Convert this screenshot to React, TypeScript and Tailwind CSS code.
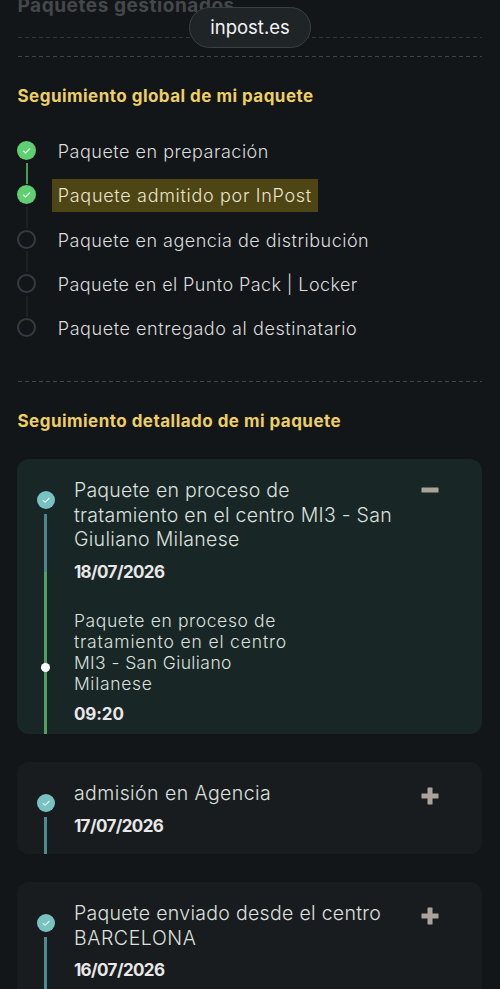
import clsx from "clsx";

interface Line {
  text: string;
  tracking: string;
}

interface Step extends Line {
  done: boolean;
  current?: boolean;
}

interface TrackingEvent {
  lines: Line[];
  date: string;
  height: string;
  detail?: { lines: Line[]; time: string };
}

const steps: Step[] = [
  { text: "Paquete en preparación", done: true, tracking: "tracking-[0.5px]" },
  { text: "Paquete admitido por InPost", done: true, current: true, tracking: "tracking-[0.69px]" },
  { text: "Paquete en agencia de distribución", done: false, tracking: "tracking-[0.49px]" },
  { text: "Paquete en el Punto Pack | Locker", done: false, tracking: "tracking-[0.41px]" },
  { text: "Paquete entregado al destinatario", done: false, tracking: "tracking-[0.57px]" },
];

const events: TrackingEvent[] = [
  {
    lines: [
      { text: "Paquete en proceso de", tracking: "tracking-[0.26px]" },
      { text: "tratamiento en el centro MI3 - San", tracking: "tracking-[0.27px]" },
      { text: "Giuliano Milanese", tracking: "tracking-[0.32px]" },
    ],
    date: "18/07/2026",
    height: "h-[275px]",
    detail: {
      lines: [
        { text: "Paquete en proceso de", tracking: "tracking-[0.63px]" },
        { text: "tratamiento en el centro", tracking: "tracking-[0.86px]" },
        { text: "MI3 - San Giuliano", tracking: "tracking-[0.42px]" },
        { text: "Milanese", tracking: "tracking-[0.7px]" },
      ],
      time: "09:20",
    },
  },
  {
    lines: [{ text: "admisión en Agencia", tracking: "tracking-[0.43px]" }],
    date: "17/07/2026",
    height: "h-[92px]",
  },
  {
    lines: [
      { text: "Paquete enviado desde el centro", tracking: "tracking-[0.3px]" },
      { text: "BARCELONA", tracking: "tracking-[0.6px]" },
    ],
    date: "16/07/2026",
    height: "h-[140px]",
  },
];

function Check() {
  return (
    <svg viewBox="0 0 18 18" className="size-full" fill="none">
      <path d="M5.8 9.2 8.1 11.3 12.4 7" stroke="#e6f5ee" strokeWidth="1.1" />
    </svg>
  );
}

function Divider({ dim }: { dim?: boolean }) {
  return (
    <div
      className={clsx(
        "mr-px ml-[0.5px] h-px",
        dim
          ? "bg-[repeating-linear-gradient(90deg,#303437_0_4px,transparent_4px_7px)]"
          : "bg-[repeating-linear-gradient(90deg,#404446_0_4px,transparent_4px_7px)]"
      )}
    />
  );
}

function Toggle({ open }: { open: boolean }) {
  return (
    <svg viewBox="0 0 18 18" className="size-[18px]" fill="#a9a399">
      <rect x="0.5" y="6.5" width="17" height="5" rx="0.5" />
      {!open && <rect x="6.5" y="0.5" width="5" height="17" rx="0.5" />}
    </svg>
  );
}

function StepRow({ step, last }: { step: Step; last: boolean }) {
  return (
    <li className="flex h-[44.35px] items-start">
      <div className="flex w-[19px] flex-col items-center pt-[6px]">
        <div
          className={clsx(
            "size-[19px] shrink-0 rounded-full",
            step.done ? "bg-[#5fcf72]" : "border-[2.5px] border-[#363a3e]"
          )}
        >
          {step.done && <Check />}
        </div>
        {!last && (
          <div
            className={clsx(
              "mt-[2.5px] h-[21px] w-[2px] shrink-0",
              step.done && !step.current ? "bg-[#469c59]" : "bg-[#1e2225]"
            )}
          />
        )}
      </div>
      <span
        className={clsx(
          "ml-[15.4px] h-[33px] px-[6px] text-[18px] leading-[33px] font-light whitespace-nowrap",
          step.tracking,
          step.current ? "bg-[#4d4513] text-[#e9e4cf]" : "text-[#dcdcdc]"
        )}
      >
        {step.text}
      </span>
    </li>
  );
}

function EventCard({ event }: { event: TrackingEvent }) {
  const open = !!event.detail;
  return (
    <article
      className={clsx(
        "flex shrink-0 overflow-hidden rounded-[12px]",
        event.height,
        open ? "bg-[#182625]" : "bg-[#181c1e]"
      )}
    >
      <div className="ml-[19px] flex w-[19px] flex-col items-center pt-[32px]">
        <div className="size-[18px] shrink-0 rounded-full bg-[#78c3c1]">
          <Check />
        </div>
        {open ? (
          <>
            <div className="mt-[5px] h-[58px] w-[3px] shrink-0 bg-[#4d8588]" />
            <div className="flex w-[3px] flex-1 items-center justify-center bg-[#52a05f]">
              <div className="mt-[28px] size-[9px] shrink-0 rounded-full bg-white" />
            </div>
          </>
        ) : (
          <div className="mt-[5px] w-[3px] flex-1 bg-[#4d8c8e]" />
        )}
      </div>
      <div className="ml-[18.5px] w-[347.5px] pt-[19px] text-[#dde0df]">
        <h3 className="text-[19.5px] leading-[24.5px] font-light whitespace-nowrap">
          {event.lines.map((line) => (
            <div key={line.text} className={line.tracking}>
              {line.text}
            </div>
          ))}
        </h3>
        <p className="mt-[8px] text-[17px] leading-6 font-bold tracking-[-0.6px] text-[#e8e8e8]">
          {event.date}
        </p>
        {event.detail && (
          <div className="mt-[26.5px]">
            <p className="text-[17.5px] leading-[21px] font-light whitespace-nowrap">
              {event.detail.lines.map((line) => (
                <span key={line.text} className={clsx("block", line.tracking)}>
                  {line.text}
                </span>
              ))}
            </p>
            <p className="mt-[8px] text-[17px] leading-6 font-bold tracking-[-0.1px] text-[#e8e8e8]">
              {event.detail.time}
            </p>
          </div>
        )}
      </div>
      <button className={clsx("self-start", open ? "mt-[22px]" : "mt-[25px]")}>
        <Toggle open={open} />
      </button>
    </article>
  );
}

export default function App() {
  return (
    <div className="relative h-[989px] w-[500px] overflow-hidden bg-[#121619] px-[17px] font-['Inter',sans-serif] antialiased">
      <h1 className="-mt-[7px] h-[44px] pl-[0.5px] text-[19px] leading-[26px] font-bold tracking-[0.55px] text-[#45484a]">
        Paquetes gestionados
      </h1>
      <Divider dim />
      <div className="h-[18px]" />
      <Divider />

      <h2 className="mt-[27px] h-6 pl-[0.5px] text-[17px] leading-6 font-bold tracking-[0.47px] text-[#eecf62]">
        Seguimiento global de mi paquete
      </h2>
      <ul className="mt-[27px] h-[246px] pl-[0.4px]">
        {steps.map((step, i) => (
          <StepRow key={step.text} step={step} last={i === steps.length - 1} />
        ))}
      </ul>
      <Divider />

      <h2 className="mt-[27px] h-6 pl-[0.5px] text-[17px] leading-6 font-bold tracking-[0.47px] text-[#eecf62]">
        Seguimiento detallado de mi paquete
      </h2>
      <section className="mt-[26px] mr-[0.6px] ml-[0.4px] flex flex-col gap-[28px]">
        {events.map((event) => (
          <EventCard key={event.date} event={event} />
        ))}
      </section>

      <div className="absolute top-[7px] left-[189px] flex h-[41px] w-[122px] items-center justify-center rounded-full border border-[#3a4144] bg-[#1f2427] text-[18.5px] text-[#f3f4f4]">
        inpost.es
      </div>
    </div>
  );
}
